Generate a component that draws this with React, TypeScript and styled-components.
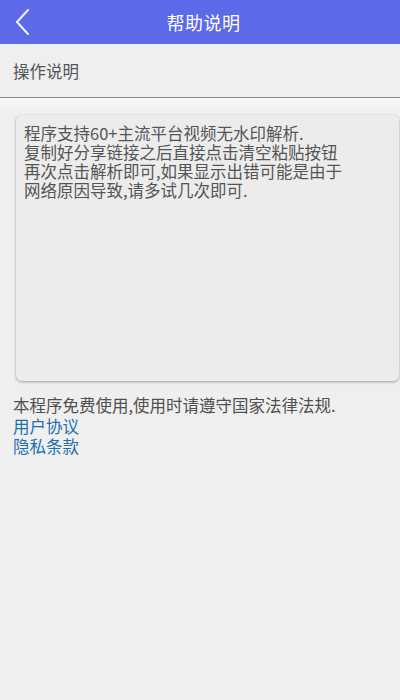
import React from "react";
import styled, { createGlobalStyle } from "styled-components";

const GlobalStyle = createGlobalStyle`
  html, body {
    margin: 0;
    padding: 0;
    background: #efefef;
    font-family: "Noto Sans CJK SC", "Noto Sans", sans-serif;
  }
  #root {
    min-height: 700px;
  }
`;

const Page = styled.div`
  width: 400px;
  min-height: 700px;
  background: #efefef;
`;

const Header = styled.header`
  position: relative;
  height: 44px;
  background: #5c69e9;
  display: flex;
  align-items: center;
  justify-content: center;
`;

const BackButton = styled.button`
  position: absolute;
  left: 7px;
  top: 6px;
  width: 32px;
  height: 32px;
  padding: 0;
  border: none;
  background: transparent;
  display: flex;
  align-items: center;
  justify-content: center;
  cursor: pointer;
`;

const Title = styled.h1`
  margin: 0 0 0 7px;
  color: #ffffff;
  font-size: 18px;
  font-weight: 400;
  letter-spacing: 0.5px;
`;

const SectionLabel = styled.div`
  height: 53px;
  padding: 0 13px;
  display: flex;
  align-items: center;
  font-size: 16.5px;
  color: #555555;
  border-bottom: 1px solid #8a8a8a;
`;

const Body = styled.main`
  padding: 17px 1px 0 16px;
  background: linear-gradient(#f8f8f8, #efefef 18px);
`;

const HelpBox = styled.div`
  height: 266px;
  box-sizing: border-box;
  padding: 9px 8px;
  background: #ececec;
  border-radius: 6px;
  box-shadow: 0 1px 3px rgba(0, 0, 0, 0.35);
  font-size: 16.5px;
  line-height: 19px;
  color: #555555;
`;

const Footer = styled.div`
  padding: 14px 13px 0;
  display: flex;
  flex-direction: column;
`;

const Notice = styled.p`
  margin: 0;
  font-size: 16.5px;
  line-height: 21px;
  color: #505050;
`;

const FooterLink = styled.a`
  font-size: 16.5px;
  line-height: 20px;
  color: #1f6fae;
  text-decoration: none;
  cursor: pointer;
`;

const helpLines = [
  "程序支持60+主流平台视频无水印解析.",
  "复制好分享链接之后直接点击清空粘贴按钮",
  "再次点击解析即可,如果显示出错可能是由于",
  "网络原因导致,请多试几次即可.",
];

const App: React.FC = () => {
  return (
    <>
      <GlobalStyle />
      <Page>
        <Header>
          <BackButton aria-label="返回">
            <svg width="16" height="26" viewBox="0 0 16 26">
              <path
                d="M13 1 L2 13 L13 25"
                fill="none"
                stroke="#f2f3ff"
                strokeWidth="2"
                strokeLinecap="round"
                strokeLinejoin="round"
              />
            </svg>
          </BackButton>
          <Title>帮助说明</Title>
        </Header>
        <SectionLabel>操作说明</SectionLabel>
        <Body>
          <HelpBox>
            {helpLines.map((line) => (
              <div key={line}>{line}</div>
            ))}
          </HelpBox>
        </Body>
        <Footer>
          <Notice>本程序免费使用,使用时请遵守国家法律法规.</Notice>
          <FooterLink>用户协议</FooterLink>
          <FooterLink>隐私条款</FooterLink>
        </Footer>
      </Page>
    </>
  );
};

export default App;
